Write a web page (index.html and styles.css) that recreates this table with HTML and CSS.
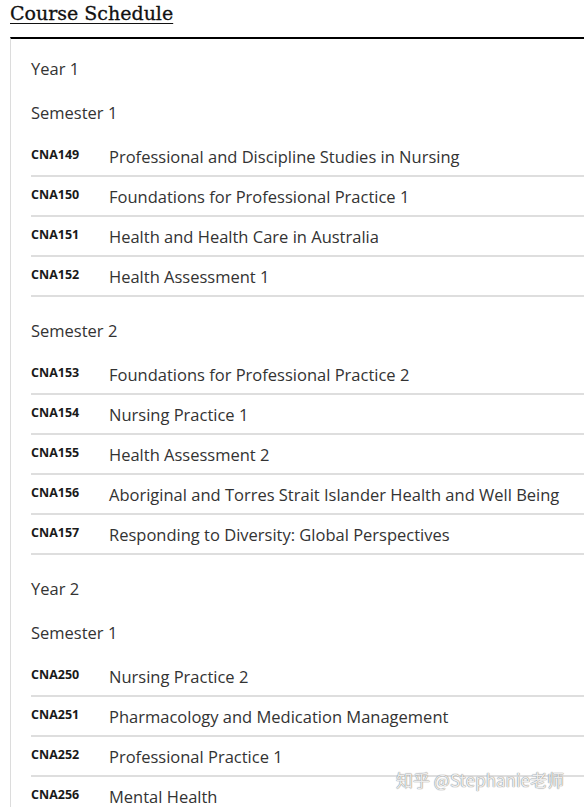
FILE: index.html
```html
<!DOCTYPE html>
<html>
<head>
<meta charset="utf-8">
<link rel="stylesheet" href="styles.css">
</head>
<body>
<h2 class="title"><span>Course Schedule</span></h2>
<div class="panel">
  <div class="year">
    <div class="year-head">Year 1</div>
    <div class="sem">
      <div class="sem-head">Semester 1</div>
      <div class="row"><span class="code">CNA149</span><span class="name">Professional and Discipline Studies in Nursing</span></div>
      <div class="row"><span class="code">CNA150</span><span class="name">Foundations for Professional Practice 1</span></div>
      <div class="row"><span class="code">CNA151</span><span class="name">Health and Health Care in Australia</span></div>
      <div class="row"><span class="code">CNA152</span><span class="name">Health Assessment 1</span></div>
    </div>
    <div class="sem">
      <div class="sem-head">Semester 2</div>
      <div class="row"><span class="code">CNA153</span><span class="name">Foundations for Professional Practice 2</span></div>
      <div class="row"><span class="code">CNA154</span><span class="name">Nursing Practice 1</span></div>
      <div class="row"><span class="code">CNA155</span><span class="name">Health Assessment 2</span></div>
      <div class="row"><span class="code">CNA156</span><span class="name">Aboriginal and Torres Strait Islander Health and Well Being</span></div>
      <div class="row"><span class="code">CNA157</span><span class="name">Responding to Diversity: Global Perspectives</span></div>
    </div>
  </div>
  <div class="year">
    <div class="year-head">Year 2</div>
    <div class="sem">
      <div class="sem-head">Semester 1</div>
      <div class="row"><span class="code">CNA250</span><span class="name">Nursing Practice 2</span></div>
      <div class="row"><span class="code">CNA251</span><span class="name">Pharmacology and Medication Management</span></div>
      <div class="row"><span class="code">CNA252</span><span class="name">Professional Practice 1</span></div>
      <div class="row"><span class="code">CNA256</span><span class="name">Mental Health</span></div>
    </div>
  </div>
</div>
<div class="watermark">知乎 @Stephanie老师</div>
</body>
</html>
```
FILE: styles.css
```css
html, body {
  margin: 0;
  padding: 0;
  background: #fff;
  overflow: hidden;
}
body {
  width: 584px;
  height: 807px;
  position: relative;
  font-family: "Open Sans", "Liberation Sans", sans-serif;
  color: #333;
}
.title {
  margin: 0;
  padding: 0 0 0 10px;
  height: 37px;
  box-sizing: border-box;
  font-family: "DejaVu Serif", "Liberation Serif", serif;
  font-weight: normal;
  font-size: 19px;
  line-height: 26px;
  color: #111;
  -webkit-text-stroke: 0.3px #111;
}
.title span {
  text-decoration: underline;
  text-underline-offset: 3px;
  text-decoration-thickness: 1px;
}
.panel {
  margin-left: 10px;
  box-sizing: border-box;
  width: 574px;
  border-top: 2px solid #000;
  border-left: 1px solid #dcdcdc;
  padding: 18px 0 0 20px;
}
.year-head, .sem-head {
  font-size: 16.5px;
  line-height: 24px;
  color: #333;
}
.year-head {
  margin-bottom: 20px;
}
.sem-head {
  margin-bottom: 12px;
}
.year + .year {
  margin-top: 22px;
}
.sem + .sem {
  margin-top: 22px;
}
.row {
  display: flex;
  align-items: center;
  height: 40px;
  box-sizing: border-box;
  border-bottom: 2px solid #dedede;
}
.code {
  width: 78px;
  flex: none;
  font-size: 12.5px;
  font-weight: bold;
  color: #1a1a1a;
  padding-bottom: 4px;
}
.name {
  font-size: 16.5px;
  color: #333;
}
.watermark {
  position: absolute;
  left: 396px;
  top: 769px;
  font-family: "Noto Sans CJK SC", "DejaVu Sans", sans-serif;
  font-size: 17px;
  line-height: 22px;
  color: rgba(255,255,255,0.85);
  text-shadow: 0 0 1px #888, 0 0 1px #888;
  white-space: nowrap;
}
```
